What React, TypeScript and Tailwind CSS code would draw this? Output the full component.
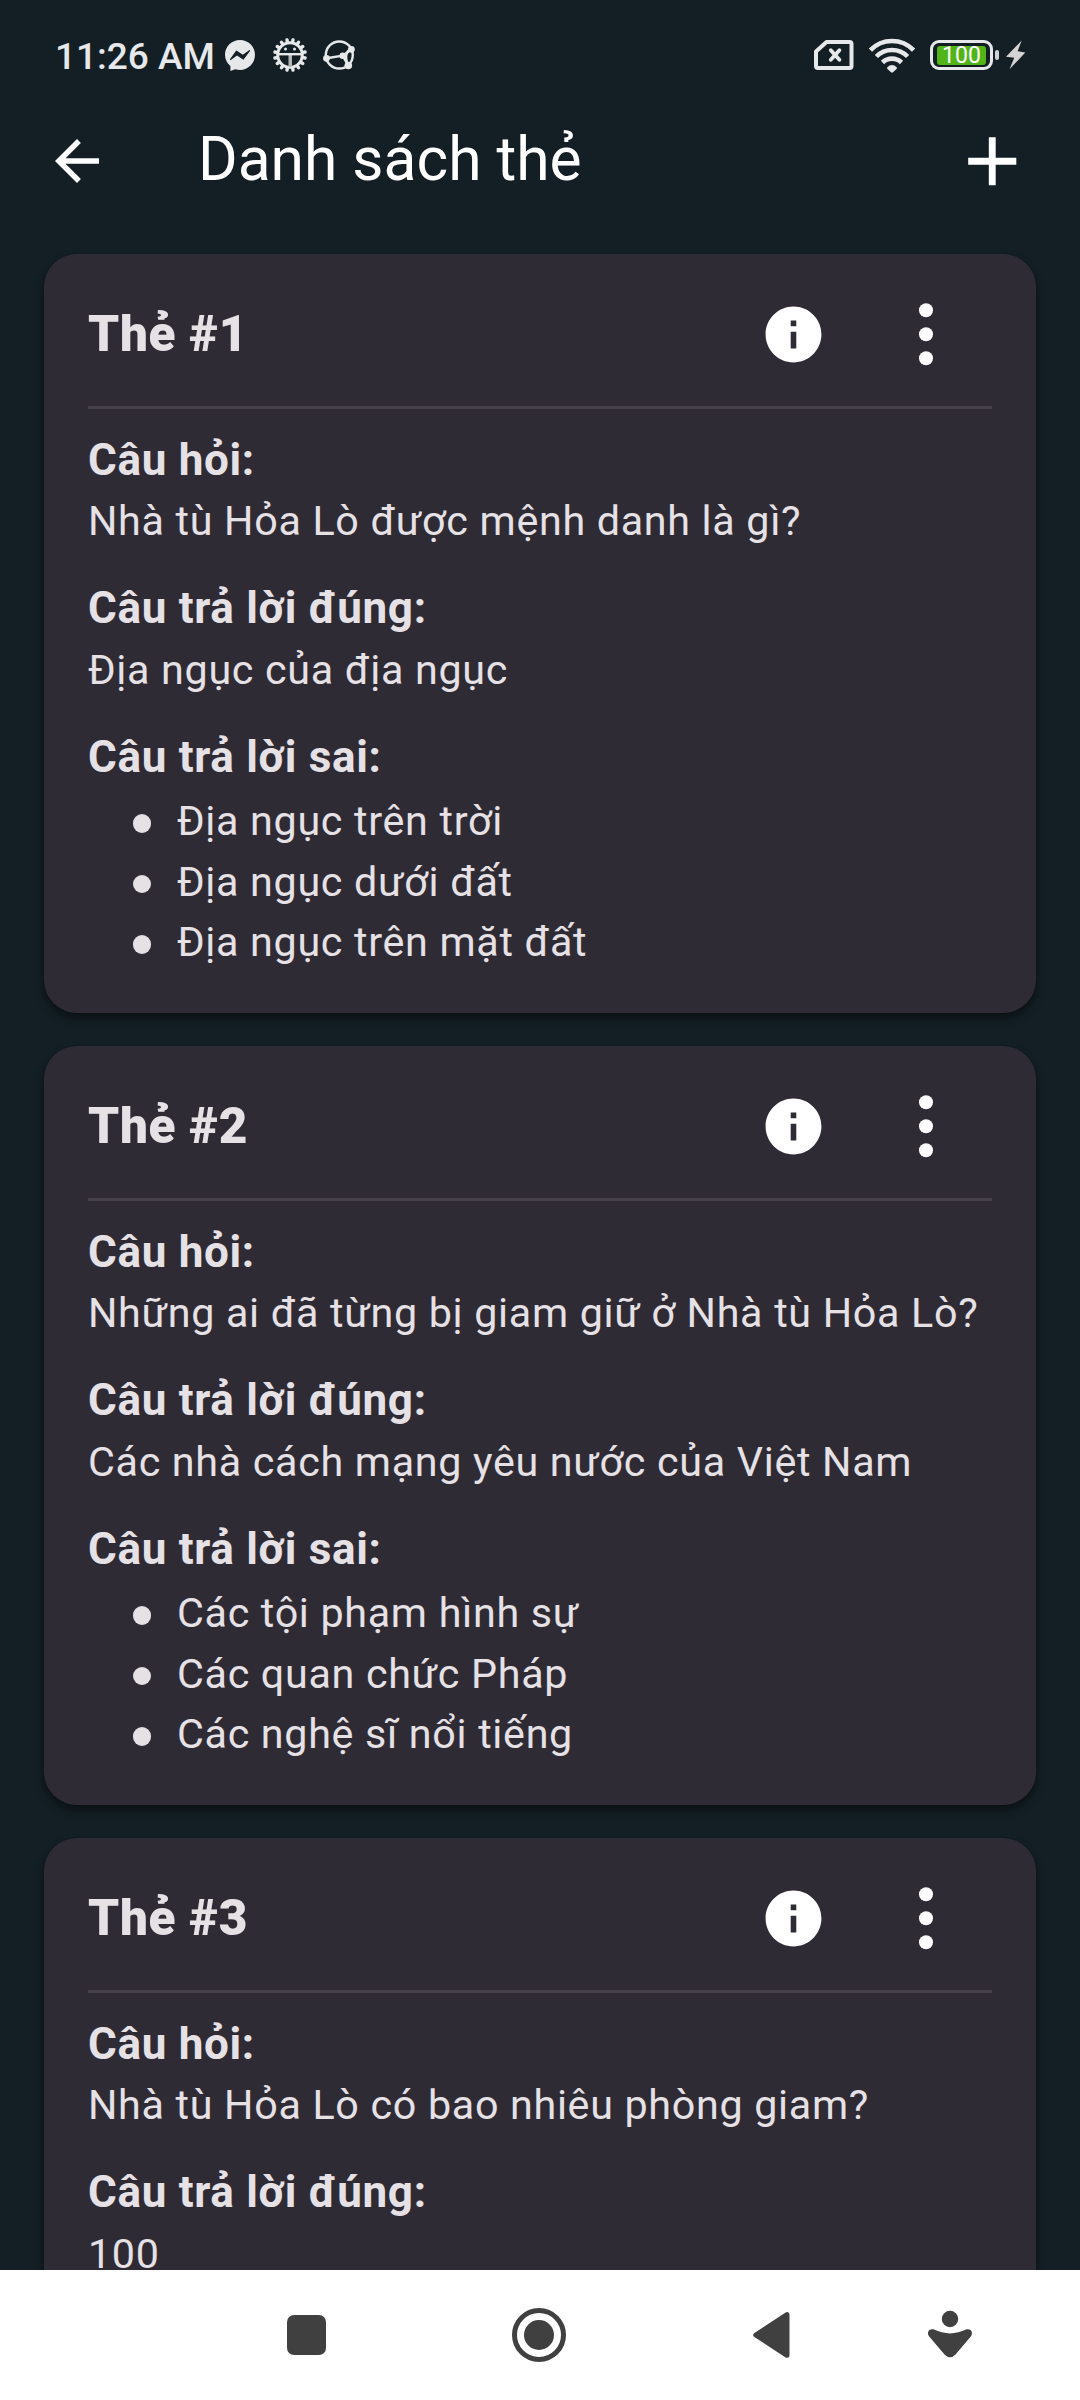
type CardData = { id: number; question: string; answer: string; wrong?: string[] };

const cards: CardData[] = [
  {
    id: 1,
    question: 'Nhà tù Hỏa Lò được mệnh danh là gì?',
    answer: 'Địa ngục của địa ngục',
    wrong: ['Địa ngục trên trời', 'Địa ngục dưới đất', 'Địa ngục trên mặt đất'],
  },
  {
    id: 2,
    question: 'Những ai đã từng bị giam giữ ở Nhà tù Hỏa Lò?',
    answer: 'Các nhà cách mạng yêu nước của Việt Nam',
    wrong: ['Các tội phạm hình sự', 'Các quan chức Pháp', 'Các nghệ sĩ nổi tiếng'],
  },
  {
    id: 3,
    question: 'Nhà tù Hỏa Lò có bao nhiêu phòng giam?',
    answer: '100',
  },
];

const gearTeeth = Array.from({ length: 16 }, (_, i) => i * 22.5 + 11.25);

function MessengerIcon() {
  return (
    <svg className="ml-[9px] h-[32px] w-[32px]" viewBox="0 0 32 32">
      <path
        fill="#e6e8ea"
        d="M16 1C24.4 1 31 7.4 31 15.8S24.4 31 16 31c-1.6 0-3.2-.2-4.700-.7L6.400 32V27C3 24.400 1 20.400 1 15.800 1 7.400 7.600 1 16 1Z"
      />
      <path d="M6.500 20.500L12.500 12.200l6.300 4.300 6.700-4.800-6.200 8.300-6.300-4.200Z" fill="#131f24" stroke="#131f24" strokeWidth="1.200" strokeLinejoin="round" />
    </svg>
  );
}

function GearIcon() {
  return (
    <svg className="ml-[16px] h-[36px] w-[36px]" viewBox="0 0 36 36">
      {gearTeeth.map((a) => (
        <rect key={a} x="16.300" y="1" width="3.400" height="5" rx="1.500" fill="#e6e8ea" transform={`rotate(${a} 18 18)`} />
      ))}
      <circle cx="18" cy="18" r="12.300" fill="none" stroke="#e6e8ea" strokeWidth="3" />
      <path d="M16.500 18h3.500v12h-3.500z" fill="#b4b8bb" />
      <path d="M6 17.200h24" stroke="#e6e8ea" strokeWidth="2.400" />
      <circle cx="13.500" cy="12" r="1.500" fill="#e6e8ea" />
      <circle cx="22.500" cy="12" r="1.500" fill="#e6e8ea" />
    </svg>
  );
}

function NetworkIcon() {
  return (
    <svg className="ml-[13px] h-[32px] w-[34px]" viewBox="0 0 34 32">
      <g fill="none" stroke="#e6e8ea" strokeWidth="2.400">
        <circle cx="18.300" cy="16" r="13.500" />
        <path d="M5.700 19.300L21.700 16.700 30.700 10.300M21.700 16.700L27.300 26.700" />
        <path d="M30.500 10c-5.500 2-7 8-3.500 16" />
      </g>
      <g fill="#e6e8ea">
        <circle cx="5.500" cy="19.300" r="3.400" />
        <circle cx="21.700" cy="16.700" r="3.200" />
        <circle cx="30.400" cy="10.300" r="3.400" />
        <circle cx="27.300" cy="26.500" r="3.800" />
      </g>
    </svg>
  );
}

function SimIcon() {
  return (
    <svg className="h-[34px] w-[42px]" viewBox="0 0 42 34">
      <g fill="none" stroke="#e6e8ea" strokeLinecap="round" strokeLinejoin="round">
        <path strokeWidth="4" d="M13.500 4H36.500a2 2 0 0 1 2 2v22a2 2 0 0 1-2 2H5a2 2 0 0 1-2-2V13.500Z" />
        <path strokeWidth="3.800" d="M17.800 12.200l8.600 9.600M26.400 12.200l-8.600 9.600" />
      </g>
    </svg>
  );
}

function WifiIcon() {
  return (
    <svg className="ml-[13px] h-[36px] w-[48px]" viewBox="0 0 48 36">
      <g fill="none" stroke="#e6e8ea" strokeWidth="4.600">
        <path d="M2.400 13.200a30 30 0 0 1 43.200 0" />
        <path d="M8.400 19.500a22 22 0 0 1 31.200 0" />
        <path d="M14.500 25.500a13.500 13.500 0 0 1 19 0" />
      </g>
      <path d="M19.300 30.200q4.700-4.400 9.400 0q.5 1-.2 1.700L25 35.200q-1 .9-2 0l-3.500-3.300q-.7-.7-.2-1.700Z" fill="#e6e8ea" />
    </svg>
  );
}

function StatusBar() {
  return (
    <div className="flex h-[84px] shrink-0 items-center pt-[26px]">
      <div className="flex h-[58px] w-full items-start justify-between pr-[54px] pl-[55px]">
        <div className="flex h-[58px] items-center">
          <span className="h-[58px] w-[160px] text-[37px] leading-[61px] font-medium whitespace-nowrap text-[#e6e8ea]">11:26 AM</span>
          <MessengerIcon />
          <GearIcon />
          <NetworkIcon />
        </div>
        <div className="flex h-[58px] items-center">
          <SimIcon />
          <WifiIcon />
          <div className="ml-[14px] flex h-[30px] w-[63px] items-center justify-center rounded-[9px] border-[3px] border-[#e6e8ea]">
            <div className="flex h-[19px] w-[49px] items-center justify-center rounded-[3px] bg-[#51b518] text-[23px] leading-[19px] text-white">
              100
            </div>
          </div>
          <div className="ml-[2px] h-[10px] w-[4px] rounded-[2px] bg-[#d0d3d5]" />
          <svg className="ml-[7px] h-[30px] w-[20px]" viewBox="0 0 20 30">
            <path d="M15.700 .5L0 16.800l8.200 1L3.500 29.300 19.300 12.600l-7.700-1.300Z" fill="#d3d3d3" />
          </svg>
        </div>
      </div>
    </div>
  );
}

function AppBar() {
  return (
    <header className="flex h-[154px] shrink-0 items-center pr-[47px] pl-[44px] text-white">
      <svg className="h-[66px] w-[66px]" viewBox="0 0 24 24" fill="currentColor">
        <path d="M20 11H7.830l5.590-5.590L12 4l-8 8 8 8 1.410-1.410L7.830 13H20v-2z" />
      </svg>
      <h1 className="ml-[88px] flex-1 pb-[2px] text-[60.500px] leading-[72px] font-normal">Danh sách thẻ</h1>
      <svg className="h-[82.500px] w-[82.500px]" viewBox="0 0 24 24" fill="currentColor">
        <path d="M19 13h-6v6h-2v-6H5v-2h6V5h2v6h6v2z" />
      </svg>
    </header>
  );
}

function Label({ children }: { children: string }) {
  return <h3 className="text-[44px] leading-[60px] font-bold">{children}</h3>;
}

function Card({ card }: { card: CardData }) {
  return (
    <article className="mb-[33px] h-[759px] shrink-0 rounded-[33px] bg-[#2f2b35] px-[44px] pt-[14px] tracking-[0.6875px] text-[#e6e1e5] shadow-[0_6px_10px_rgba(0,0,0,0.32),0_2px_4px_rgba(0,0,0,0.2)]">
      <div className="flex h-[132px] items-center">
        <h2 className="flex-1 text-[49.500px] leading-[60px] font-black">Thẻ #{card.id}</h2>
        <svg className="h-[67px] w-[67px] text-white" viewBox="0 0 24 24" fill="currentColor">
          <path d="M12 2C6.480 2 2 6.480 2 12s4.480 10 10 10 10-4.480 10-10S17.520 2 12 2zm1 15h-2v-6h2v6zm0-8h-2V7h2v2z" />
        </svg>
        <svg className="mr-[33px] ml-[66px] h-[66px] w-[66px] text-white" viewBox="0 0 66 66" fill="currentColor">
          <circle cx="33" cy="9.300" r="7" />
          <circle cx="33" cy="33.300" r="7" />
          <circle cx="33" cy="57.300" r="7" />
        </svg>
      </div>
      <div className="mt-[6px] mb-[21px] h-[3px] bg-[#45404a]" />
      <section className="mb-[26px]">
        <Label>Câu hỏi:</Label>
        <p className="mt-px text-[41.250px] leading-[61px] whitespace-nowrap">{card.question}</p>
      </section>
      <section className="mb-[26px]">
        <Label>Câu trả lời đúng:</Label>
        <p className="mt-[2px] text-[41.250px] leading-[61px] whitespace-nowrap">{card.answer}</p>
      </section>
      {card.wrong && (
        <section>
          <Label>Câu trả lời sai:</Label>
          <ul className="mt-[4px]">
            {card.wrong.map((w) => (
              <li key={w} className="flex h-[60.500px] items-center text-[41.250px] leading-[60.500px]">
                <span className="mt-[4px] mr-[26px] ml-[44.500px] h-[18.500px] w-[18.500px] rounded-full bg-[#e6e1e5]" />
                {w}
              </li>
            ))}
          </ul>
        </section>
      )}
    </article>
  );
}

function NavBar() {
  return (
    <nav className="flex h-[130px] shrink-0 items-center bg-white pl-[286.500px] text-[#404040]">
      <div className="h-[39.500px] w-[39.500px] rounded-[7px] bg-[#404040]" />
      <svg className="ml-[185px] h-[56px] w-[56px]" viewBox="0 0 56 56">
        <circle cx="28" cy="28" r="24.500" fill="none" stroke="currentColor" strokeWidth="5" />
        <circle cx="28" cy="28" r="15" fill="currentColor" />
      </svg>
      <svg className="ml-[184px] h-[48px] w-[40px]" viewBox="0 0 40 48">
        <path
          d="M4.800 24L36 3.700V44.300Z"
          fill="currentColor"
          stroke="currentColor"
          strokeWidth="5"
          strokeLinejoin="round"
        />
      </svg>
      <svg className="ml-[135px] h-[50px] w-[48px]" viewBox="0 0 48 50">
        <circle cx="24" cy="9" r="8.200" fill="currentColor" />
        <path
          d="M7.500 19.300Q24 27.500 40.500 19.300C45 18.300 47.500 22.300 45 26.200L29.500 44.500Q24 50 18.500 44.500L3 26.200C.5 22.300 3 18.300 7.500 19.300Z"
          fill="currentColor"
        />
      </svg>
    </nav>
  );
}

export default function App() {
  return (
    <div className="flex h-[2400px] w-[1080px] flex-col overflow-hidden bg-[#131f24] font-[Roboto,sans-serif]">
      <StatusBar />
      <AppBar />
      <main className="flex min-h-0 flex-1 flex-col overflow-hidden px-[44px] pt-[16px]">
        {cards.map((c) => (
          <Card key={c.id} card={c} />
        ))}
      </main>
      <NavBar />
    </div>
  );
}
